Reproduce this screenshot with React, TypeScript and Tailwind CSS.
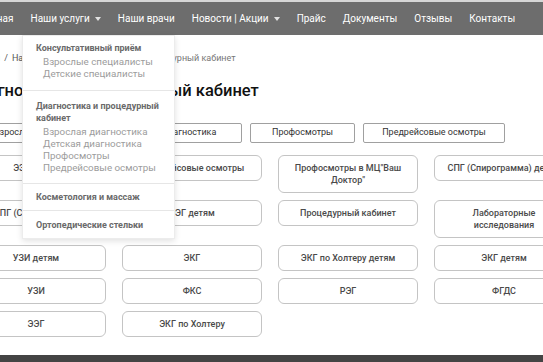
import React from 'react'

const navItems: { label: string; caret?: boolean; menu?: boolean }[] = [
  { label: 'Главная' },
  { label: 'Наши услуги', caret: true, menu: true },
  { label: 'Наши врачи' },
  { label: 'Новости | Акции', caret: true },
  { label: 'Прайс' },
  { label: 'Документы' },
  { label: 'Отзывы' },
  { label: 'Контакты' },
]

// first tab sits mostly behind the open menu, so it is narrower and left-aligned
const tabs = [
  { label: 'Взрослая диагностика', cls: 'w-[106px] pl-[7px] text-left' },
  { label: 'Детская диагностика', cls: 'w-[142px] text-center' },
  { label: 'Профосмотры', cls: 'w-[105px] text-center' },
  { label: 'Предрейсовые осмотры', cls: 'w-[142px] text-center' },
]

const cards = [
  'ЭЭГ детям',
  'Предрейсовые осмотры',
  'Профосмотры в МЦ"Ваш Доктор"',
  'СПГ (Спирограмма) детям',
  'СПГ (Спирограмма)',
  'ЭЭГ детям',
  'Процедурный кабинет',
  'Лабораторные исследования',
  'УЗИ детям',
  'ЭКГ',
  'ЭКГ по Холтеру детям',
  'ЭКГ детям',
  'УЗИ',
  'ФКС',
  'РЭГ',
  'ФГДС',
  'ЭЭГ',
  'ЭКГ по Холтеру',
]

function Caret() {
  return (
    <span className="ml-[5px] inline-block h-0 w-0 border-x-[3px] border-t-[4px] border-x-transparent border-t-white/80 align-middle" />
  )
}

function Dropdown() {
  return (
    <div className="absolute left-0 top-full z-10 w-[153px] border border-[#ececec] bg-white text-left shadow-[0_2px_6px_rgba(0,0,0,0.12)]">
      <div className="border-b border-[#e6e6e6] pb-[10px] pt-[6px]">
        <div className="pl-[13px] text-[9px] font-bold leading-[12px] text-[#6a6a6a]">Консультативный приём</div>
        <div className="mt-[2px] pl-[20px] text-[9.8px] leading-[12px] text-[#9c9c9c]">
          <div>Взрослые специалисты</div>
          <div>Детские специалисты</div>
        </div>
      </div>
      <div className="border-b border-[#e6e6e6] pb-[9px] pt-[9px]">
        <div className="pl-[13px] text-[9px] font-bold leading-[12px] text-[#6a6a6a]">
          Диагностика и процедурный
          <br />
          кабинет
        </div>
        <div className="mt-[2px] pl-[20px] text-[9.8px] leading-[12px] text-[#9c9c9c]">
          <div>Взрослая диагностика</div>
          <div>Детская диагностика</div>
          <div>Профосмотры</div>
          <div>Предрейсовые осмотры</div>
        </div>
      </div>
      <div className="border-b border-[#e6e6e6] pb-[7px] pt-[7px] pl-[13px] text-[9px] font-bold leading-[12px] text-[#6a6a6a]">
        Косметология и массаж
      </div>
      <div className="pb-[7px] pt-[8px] pl-[13px] text-[9px] font-bold leading-[12px] text-[#6a6a6a]">
        Ортопедические стельки
      </div>
    </div>
  )
}

export default function App() {
  return (
    <div className="relative h-[362px] w-[543px] overflow-hidden bg-white font-['Roboto','Liberation_Sans',sans-serif]">
      <div className="h-[2px] bg-[#d6d6d6]" />
      <nav className="h-[33px] bg-[#6d6d6d]">
        <ul className="ml-[-33px] flex h-full items-center whitespace-nowrap text-[10px] text-white">
          {navItems.map((item) => (
            <li key={item.label} className="relative flex h-full items-center px-[8.5px]">
              <span>{item.label}</span>
              {item.caret && <Caret />}
              {item.menu && <Dropdown />}
            </li>
          ))}
        </ul>
      </nav>

      <main className="ml-[-40px] w-[640px]">
        <div className="ml-[6px] mt-[17px] flex items-center gap-[4px] whitespace-nowrap text-[9px] leading-[12px] text-[#555]">
          <span>Главная</span>
          <span>/</span>
          <span>Наши услуги</span>
          <span>/</span>
          <span className="text-[#777]">Диагностика и процедурный кабинет</span>
        </div>

        <h1 className="ml-[7px] mt-[17px] whitespace-nowrap text-[16.5px] font-medium leading-[20px] text-[#111]">
          Диагностика и процедурный кабинет
        </h1>

        <div className="ml-[26px] mt-[22px] flex gap-[8px] whitespace-nowrap">
          {tabs.map((t) => (
            <button
              key={t.label}
              type="button"
              className={`h-[20px] shrink-0 overflow-hidden rounded-[2px] border border-[#a0a0a0] text-[9px] text-[#333] ${t.cls}`}
            >
              {t.label}
            </button>
          ))}
        </div>

        <div className="ml-[6px] mt-[12px] grid w-[608px] grid-cols-4 items-start gap-x-[16px] gap-y-[7px]">
          {cards.map((c, i) => (
            <div
              key={i}
              className="flex min-h-[26px] items-center justify-center rounded-[6px] border border-[#c4c4c4] px-[8px] py-[6px] text-center text-[9px] font-medium leading-[12px] text-[#4a4a4a]"
            >
              {c}
            </div>
          ))}
        </div>
      </main>

      <footer className="absolute bottom-0 left-0 h-[7px] w-full bg-[#444]" />
    </div>
  )
}
